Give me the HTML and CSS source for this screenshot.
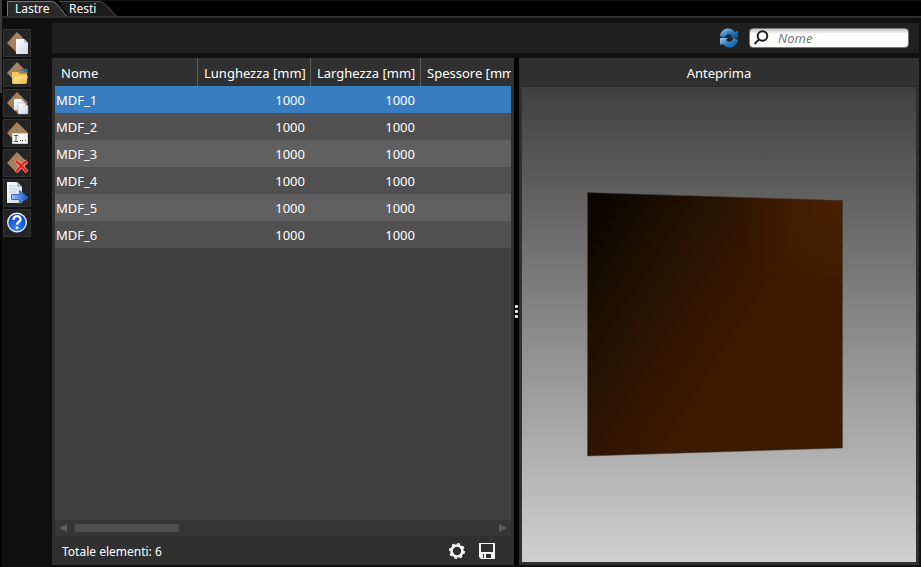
FILE: index.html
```html
<!DOCTYPE html>
<html lang="it">
<head>
<meta charset="utf-8">
<title>Lastre</title>
<link rel="stylesheet" href="styles.css">
</head>
<body>
<svg class="defs" aria-hidden="true">
  <defs>
    <linearGradient id="paper" x1="0" y1="0" x2="1" y2="1"><stop offset="0" stop-color="#fff"/><stop offset="1" stop-color="#ccd6ea"/></linearGradient>
    <linearGradient id="folder" x1="0" y1="0" x2="1" y2="1"><stop offset="0" stop-color="#fff0a0"/><stop offset="1" stop-color="#e6b13c"/></linearGradient>
    <linearGradient id="arrow" x1="0" y1="0" x2="1" y2="0"><stop offset="0" stop-color="#9cc6f6"/><stop offset="1" stop-color="#0b4fc4"/></linearGradient>
    <radialGradient id="ball" cx=".45" cy=".85" r=".9"><stop offset="0" stop-color="#2f86ff"/><stop offset="1" stop-color="#0a35b4"/></radialGradient>
    <linearGradient id="sync" x1="0" y1="0" x2="1" y2="1"><stop offset="0" stop-color="#a5cdea"/><stop offset=".5" stop-color="#2f7fc0"/><stop offset="1" stop-color="#00509c"/></linearGradient>
    <linearGradient id="board" gradientUnits="userSpaceOnUse" x1="65" y1="105" x2="352" y2="287"><stop offset="0" stop-color="#050200"/><stop offset=".2" stop-color="#1b0e00"/><stop offset=".32" stop-color="#251300"/><stop offset=".38" stop-color="#2c1300"/><stop offset=".6" stop-color="#3a1a00"/><stop offset="1" stop-color="#3c1a00"/></linearGradient>
    <radialGradient id="glow" cx="1" cy="0" r=".45"><stop offset="0" stop-color="#4a2000"/><stop offset="1" stop-color="#4a2000" stop-opacity="0"/></radialGradient>
    <path id="slab" d="M4 14 14 3l11 11-11 10z" fill="#a5825f"/>
  </defs>
</svg>
<div class="app">
  <nav class="tabs">
    <button class="tab tab-active" type="button"><svg class="tab-shape" viewBox="0 0 60 16" aria-hidden="true"><path class="tab-fill" d="M0 16V1h44c8 0 10 9 16 15z"/><path class="tab-line" d="M.5 16V1.500h44c5 0 9 8 15 14.500"/></svg><span>Lastre</span></button>
    <button class="tab" type="button"><svg class="tab-shape" viewBox="0 0 60 16" aria-hidden="true"><path class="tab-fill" d="M0 1h40c8 0 12 9 18 15H9z"/><path class="tab-line" d="M0 1.500h40c5 0 10 8 17 14.500"/></svg><span>Resti</span></button>
  </nav>
  <div class="workspace">
    <aside class="tools">
      <button type="button" aria-label="Nuovo"><svg viewBox="0 0 28 28"><use href="#slab"/><path d="M13 10h8l4 4v11H13z" fill="url(#paper)"/><path d="M21 10v4h4z" fill="#b9c5db"/></svg></button>
      <button type="button" aria-label="Apri"><svg viewBox="0 0 28 28"><use href="#slab"/><path d="M18 11h3l2 2M22 10l2 1v2" stroke="#2e6ea8" stroke-width="1.500" fill="none"/><path d="M9 24V13h6l2 2h7v9z" fill="#efc95c"/><path d="M9.500 25l2.500-7 13-1-2 8z" fill="url(#folder)"/></svg></button>
      <button type="button" aria-label="Duplica"><svg viewBox="0 0 28 28"><use href="#slab"/><path d="M11 10h7l3 3v8H11z" fill="url(#paper)"/><path d="M15 14h7l3 3v8H15z" fill="url(#paper)" stroke="#a3aab8" stroke-width=".5"/><path d="M22 14v3h3z" fill="#b9c5db"/></svg></button>
      <button type="button" aria-label="Rinomina"><svg viewBox="0 0 28 28"><use href="#slab"/><path d="M9.500 14.500h15v10h-15z" fill="#fff" stroke="#d0d0d0"/><path d="M11 16.500h4M11 22.500h4M13 16v6" stroke="#555" fill="none"/><path d="M17 21h1v1h-1zM19 21h1v1h-1zM22 21h1v1h-1z" fill="#333"/></svg></button>
      <button type="button" aria-label="Elimina"><svg viewBox="0 0 28 28"><use href="#slab"/><path d="M13 12c4 3 8 7 11 11M24 12c-5 3-8 7-11 11" stroke="#f5b2a8" stroke-width="3.600" fill="none"/><path d="M13 12c4 3 8 7 11 11M24 12c-5 3-8 7-11 11" stroke="#e0201c" stroke-width="2.200" fill="none"/></svg></button>
      <button type="button" aria-label="Esporta"><svg viewBox="0 0 28 28"><path d="M4 3h10l5 5v16H4z" fill="url(#paper)"/><path d="M14 3v5h5z" fill="#a9b9d6"/><path d="M6 7h6M6 10h9M6 13h7" stroke="#b7c2d6" fill="none"/><path d="M8.500 15.500h8v-4l8.500 7-8.500 6v-4h-8z" fill="url(#arrow)" stroke="#2f6fd4"/></svg></button>
      <button type="button" aria-label="Aiuto"><svg viewBox="0 0 28 28"><circle cx="14" cy="13.500" r="10" fill="#e9eef8"/><circle cx="14" cy="13.500" r="8.600" fill="url(#ball)"/><path d="M10.500 11c0-5 7-5 7-.8 0 2.800-3.500 2.800-3.500 5.600" fill="none" stroke="#fff" stroke-width="2.300"/><circle cx="14" cy="18.800" r="1.400" fill="#fff"/></svg></button>
    </aside>
    <main class="content">
      <header class="topbar">
        <button class="refresh" type="button" aria-label="Aggiorna"><svg viewBox="0 0 20 20"><path d="M1 8C2 0 12-2 16 4l3-1v7h-8l2-2c-2-3-6-2-7 1l-1 1z" fill="url(#sync)"/><path d="M19 12c-1 8-11 10-15 4l-3 1v-7h8l-2 2c2 3 6 2 7-1l1-1z" fill="url(#sync)"/></svg></button>
        <label class="search"><svg viewBox="0 0 16 16" aria-hidden="true"><circle cx="9.500" cy="6" r="4.800"/><path d="M6 9.500 1.500 14"/></svg><input type="text" placeholder="Nome" aria-label="Cerca per nome"></label>
      </header>
      <div class="panels">
        <section class="list">
          <div class="table-view">
            <table>
              <colgroup><col class="c-name"><col class="c-length"><col class="c-size"><col class="c-last"></colgroup>
              <thead><tr><th>Nome</th><th>Lunghezza [mm]</th><th>Larghezza [mm]</th><th>Spessore [mm]</th></tr></thead>
              <tbody>
                <tr class="selected"><td>MDF_1</td><td>1000</td><td>1000</td><td>10</td></tr>
                <tr><td>MDF_2</td><td>1000</td><td>1000</td><td>20</td></tr>
                <tr><td>MDF_3</td><td>1000</td><td>1000</td><td>30</td></tr>
                <tr><td>MDF_4</td><td>1000</td><td>1000</td><td>40</td></tr>
                <tr><td>MDF_5</td><td>1000</td><td>1000</td><td>50</td></tr>
                <tr><td>MDF_6</td><td>1000</td><td>1000</td><td>60</td></tr>
              </tbody>
            </table>
          </div>
          <div class="scrollbar">
            <svg viewBox="0 0 8 8"><path d="M8 0v8L0 4z"/></svg>
            <div class="track"><div class="thumb"></div></div>
            <svg viewBox="0 0 8 8"><path d="M0 0v8l8-4z"/></svg>
          </div>
          <footer class="status">
            <span>Totale elementi: 6</span>
            <button type="button" aria-label="Impostazioni"><svg viewBox="0 0 16 16"><circle cx="8" cy="8" r="5.500" fill="none" stroke="#fff" stroke-width="2.600"/><circle cx="8" cy="8" r="7.200" fill="none" stroke="#fff" stroke-width="1.600" stroke-dasharray="2.800 2.855"/></svg></button>
            <button type="button" aria-label="Salva"><svg viewBox="0 0 16 16"><path d="M0 0h16v16H2l-2-2zM2 1v8h12V1zM4 11v4h8v-4z" fill="#f4f4f4" fill-rule="evenodd"/><path d="M5 11h2v4H5z" fill="#f4f4f4"/></svg></button>
          </footer>
        </section>
        <div class="splitter"><i></i><i></i><i></i></div>
        <section class="preview">
          <h2>Anteprima</h2>
          <div class="canvas"><svg viewBox="0 0 394 475"><path d="M65.500 105.500 320.500 113.500V361L65.500 369z" fill="url(#board)"/><path d="M65.500 105.500 320.500 113.500V361L65.500 369z" fill="url(#glow)" stroke="#444" stroke-opacity=".5"/></svg></div>
        </section>
      </div>
    </main>
  </div>
</div>
</body>
</html>
```
FILE: styles.css
```css
* { box-sizing: border-box; }
body { margin: 0; background: #101010; color: #fff; font: 13px/18px "Noto Sans", "Open Sans", sans-serif; }
button { border: 0; padding: 0; margin: 0; background: none; color: inherit; font: inherit; }
svg { display: block; }
.defs { position: absolute; width: 0; height: 0; }
.app { display: flex; flex-direction: column; height: 100vh; border-style: solid; border-width: 0 0 0 2px; border-image: linear-gradient(#3c3c3c 94px, #050505 94px) 1; }

.tabs { display: flex; height: 18px; padding-left: 5px; background: #000; border-top: 1px solid #111; border-bottom: 2px solid #2d3033; }
.tab { position: relative; width: 60px; height: 16px; padding-left: 8px; text-align: left; font-size: 12px; line-height: 14px; }
.tab + .tab { margin-left: -8px; padding-left: 10px; }
.tab span { position: relative; }
.tab-shape { position: absolute; left: 0; top: -1px; width: 60px; height: 16px; }
.tab-fill { fill: #1c1c1c; }
.tab-active { z-index: 1; }
.tab-active .tab-fill { fill: #292929; }
.tab-line { fill: none; stroke: #484848; }
.tab-active .tab-line { stroke: #777; }

.workspace { flex: 1; min-height: 0; display: flex; gap: 21px; padding: 5px 2px 2px 1px; }
.tools { display: flex; flex-direction: column; gap: 2px; padding-top: 6px; }
.tools button { width: 28px; height: 28px; background: #242424; border: 1px solid #333; }
.tools svg { width: 28px; height: 28px; margin: -1px; }
.content { flex: 1; min-width: 0; display: flex; flex-direction: column; gap: 5px; }
.topbar { display: flex; justify-content: flex-end; align-items: center; gap: 10px; height: 30px; background: #202020; }
.refresh svg { width: 20px; height: 20px; }
.search { display: flex; align-items: center; gap: 9px; width: 160px; height: 20px; margin-right: 10px; padding-left: 3px; border: 1px solid #777; border-radius: 4px; background: linear-gradient(#c4c4c4, #fff 5px); }
.search svg { width: 16px; height: 16px; flex: none; fill: none; stroke: #1d1d1d; stroke-width: 2; }
.search input { min-width: 0; flex: 1; height: 18px; border: 0; padding: 0; background: none; outline: 0; font: italic 13px/18px "Noto Sans", sans-serif; }
.search input::placeholder { color: #7a7a7a; opacity: 1; }

.panels { flex: 1; min-height: 0; display: grid; grid-template-columns: 462fr 5px 400fr; }
.list { min-width: 0; display: flex; flex-direction: column; padding: 0 3px; background: #303030; }
.table-view { flex: 1; min-height: 0; overflow: hidden; background: #404040; }
table { width: 475px; table-layout: fixed; border-collapse: separate; border-spacing: 0; }
.c-name { width: 143px; }
.c-length { width: 113px; }
.c-size { width: 110px; }
.c-last { width: 109px; }
th { height: 28px; padding: 2px 0 0 6px; text-align: left; font-weight: 400; white-space: nowrap; background: #303030; border-right: 1px solid #5c5c5c; }
td { height: 27px; padding: 0 6px 0 0; text-align: right; background: #505050; }
td:last-child { padding-right: 4px; }
td:first-child { padding: 0 0 0 1px; text-align: left; }
tr:nth-child(odd) td { background: #606060; }
tr.selected td { background: #387dc0; }
.scrollbar { display: flex; align-items: center; gap: 8px; height: 16px; padding: 0 4px; background: #363636; }
.scrollbar svg { width: 8px; height: 8px; fill: #5c5c5c; }
.track { flex: 1; }
.thumb { width: 25%; height: 8px; background: #505050; }
.status { display: flex; align-items: center; gap: 14px; height: 29px; padding: 0 16px 0 7px; font-size: 12px; }
.status span { flex: 1; padding-top: 2px; }
.status svg { width: 16px; height: 16px; }
.splitter { display: flex; flex-direction: column; align-items: center; justify-content: center; gap: 2px; background: #000; }
.splitter i { width: 3px; height: 3px; border-radius: 1px; background: #eee; }
.preview { min-width: 0; display: flex; flex-direction: column; padding: 0 3px 3px; background: #303030; }
.preview h2 { height: 29px; margin: 0; padding-top: 2px; border-bottom: 1px solid #262626; text-align: center; font-size: 13px; font-weight: 400; line-height: 26px; }
.canvas { flex: 1; min-height: 0; background: linear-gradient(#404040, #d0d0d0); }
.canvas svg { width: 100%; height: 100%; }
```
